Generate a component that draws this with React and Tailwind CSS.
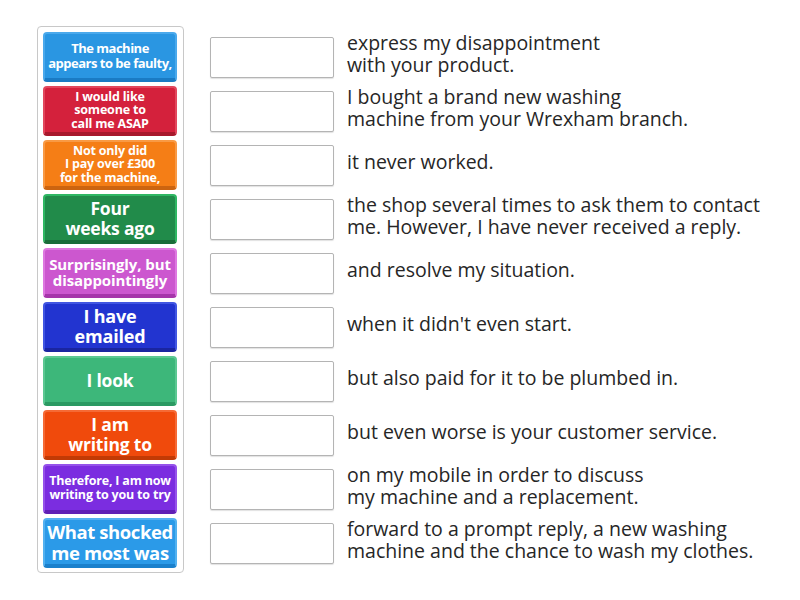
import React from "react";

const tiles = [
  { lines: ["The machine", "appears to be faulty,"], cls: "bg-[#2a96e2] border-[#4aa9ec] border-b-[#1a7bc4] text-[13px] leading-[15px] tracking-[-0.5px]" },
  { lines: ["I would like", "someone to", "call me ASAP"], cls: "bg-[#d4213c] border-[#e2475d] border-b-[#a8182c] text-[12.5px] leading-[13.5px] tracking-[-0.2px]" },
  { lines: ["Not only did", "I pay over £300", "for the machine,"], cls: "bg-[#f57e16] border-[#f89a45] border-b-[#cc6410] text-[12.5px] leading-[13.5px] tracking-[-0.2px]" },
  { lines: ["Four", "weeks ago"], cls: "bg-[#218b4a] border-[#2fb763] border-b-[#196c39] text-[17.5px] leading-[20px] tracking-[-0.2px]" },
  { lines: ["Surprisingly, but", "disappointingly"], cls: "bg-[#cc57cf] border-[#de78e0] border-b-[#a635aa] text-[15px] leading-[16px] tracking-[-0.1px]" },
  { lines: ["I have", "emailed"], cls: "bg-[#2234d0] border-[#4156e2] border-b-[#1a25a0] text-[18px] leading-[20px] tracking-[-0.2px]" },
  { lines: ["I look"], cls: "bg-[#3db77a] border-[#5cc892] border-b-[#2a9a62] text-[17.5px] leading-[20px] tracking-[-0.2px]" },
  { lines: ["I am", "writing to"], cls: "bg-[#f04a0c] border-[#f56a35] border-b-[#c23a05] text-[17.5px] leading-[20px] tracking-[-0.2px]" },
  { lines: ["Therefore, I am now", "writing to you to try"], cls: "bg-[#7b2de0] border-[#9652ea] border-b-[#5f1fb5] text-[12.5px] leading-[14px] tracking-[-0.2px]" },
  { lines: ["What shocked", "me most was"], cls: "bg-[#2b9ae8] border-[#52b1f0] border-b-[#1a80cc] text-[18.5px] leading-[21px] tracking-[-0.4px]" },
];

const answers = [
  ["express my disappointment", "with your product."],
  ["I bought a brand new washing", "machine from your Wrexham branch."],
  ["it never worked."],
  ["the shop several times to ask them to contact", "me. However, I have never received a reply."],
  ["and resolve my situation."],
  ["when it didn't even start."],
  ["but also paid for it to be plumbed in."],
  ["but even worse is your customer service."],
  ["on my mobile in order to discuss", "my machine and a replacement."],
  ["forward to a prompt reply, a new washing", "machine and the chance to wash my clothes."],
];

export default function App() {
  return (
    <div
      className="w-[800px] h-[600px] bg-white flex items-start pt-[26px] pl-[37px]"
      style={{ fontFamily: '"Open Sans", "Noto Sans", sans-serif' }}
    >
      <div className="w-[147px] border border-[#c8c8c8] rounded-[4px] bg-white pt-[5px] pb-[4px] px-[5px] flex flex-col gap-[4px]">
        {tiles.map((t, i) => (
          <div
            key={i}
            className={`h-[50px] w-[134px] rounded-[4px] border-t-[2px] border-x-[2px] border-b-[4px] flex flex-col items-center justify-center text-white font-bold text-center ${t.cls}`}
          >
            {t.lines.map((l, j) => (
              <span key={j} className="whitespace-nowrap">{l}</span>
            ))}
          </div>
        ))}
      </div>
      <div className="flex flex-col gap-[4px] pt-[6px] ml-[26px]">
        {answers.map((a, i) => (
          <div key={i} className="h-[50px] flex items-center">
            <div className="w-[124px] h-[41px] border border-[#b4b4b4] rounded-[2px] bg-white shadow-[0_1px_1px_rgba(0,0,0,0.12)] shrink-0" />
            <div className="ml-[13px] text-[19.5px] leading-[22px] text-[#262626] -mt-[6px]">
              {a.map((l, j) => (
                <div key={j} className="whitespace-nowrap">{l}</div>
              ))}
            </div>
          </div>
        ))}
      </div>
    </div>
  );
}
